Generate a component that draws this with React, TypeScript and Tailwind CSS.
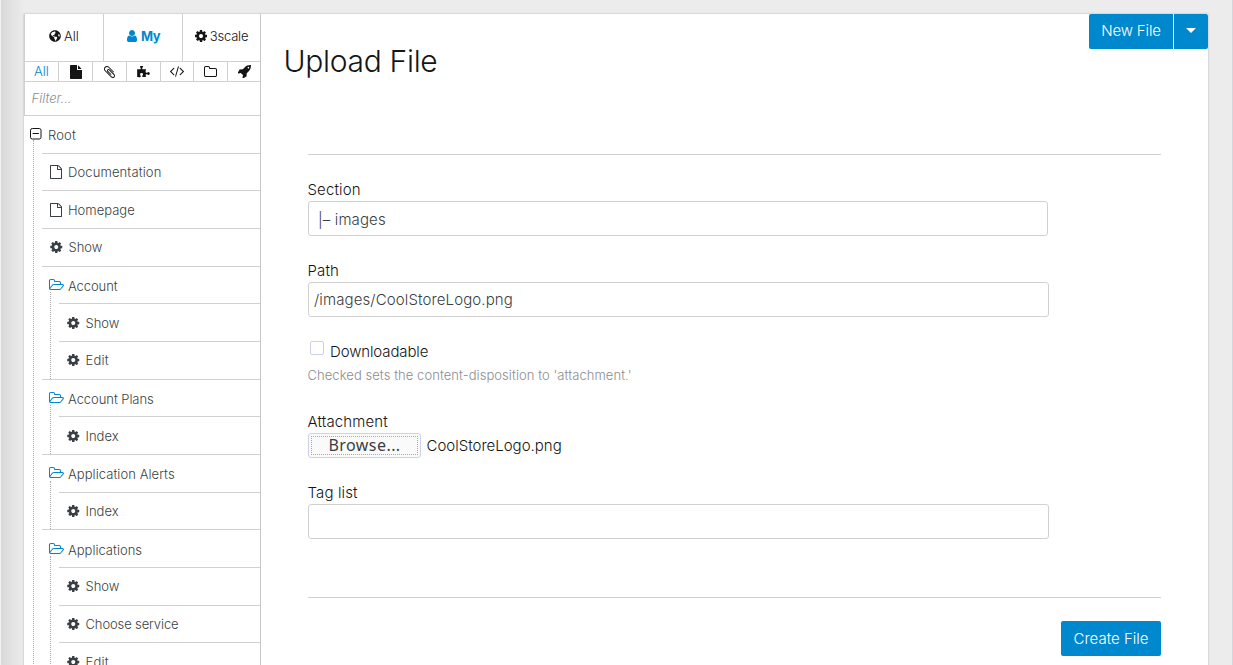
import React from "react";
import { FaGlobeAmericas } from "react-icons/fa";

type GlyphProps = { className?: string };

const glyph =
  (viewBox: string, d: string) =>
  ({ className }: GlyphProps) => (
    <svg viewBox={viewBox} fill="currentColor" className={className} aria-hidden="true">
      <path d={d} />
    </svg>
  );

const Cog = glyph(
  "128 128 1536 1536",
  "M1152 896q0-106-75-181t-181-75-181 75-75 181 75 181 181 75 181-75 75-181zm512-109v222q0 12-8 23t-20 13l-185 28q-19 54-39 91 35 50 107 138 10 12 10 25t-9 23q-27 37-99 108t-94 71q-12 0-26-9l-138-108q-44 23-91 38-16 136-29 186-7 28-36 28h-222q-14 0-24.5-8.5t-11.5-21.5l-28-184q-49-16-90-37l-141 107q-10 9-25 9-14 0-25-11-126-114-165-168-7-10-7-23 0-12 8-23 15-21 51-66.5t54-70.5q-27-50-41-99l-183-27q-13-2-21-12.5t-8-23.5v-222q0-12 8-23t19-13l186-28q14-46 39-92-40-57-107-138-10-12-10-24 0-10 9-23 26-36 98.5-107.5t94.5-71.5q13 0 26 10l138 107q44-23 91-38 16-136 29-186 7-28 36-28h222q14 0 24.5 8.5t11.5 21.5l28 184q49 16 90 37l142-107q9-9 24-9 13 0 25 10 129 119 165 170 7 8 7 22 0 12-8 23-15 21-51 66.5t-54 70.5q26 50 41 98l183 28q13 2 21 12.5t8 23.5z",
);
const FolderOpen = glyph(
  "64 128 1920 1408",
  "M1845 931q0-35-53-35h-1088q-40 0-85.5 21.5t-71.5 52.5l-294 363q-18 24-18 40 0 35 53 35h1088q40 0 86-22t71-53l294-363q18-22 18-39zm-1141-163h768v-160q0-40-28-68t-68-28h-576q-40 0-68-28t-28-68v-64q0-40-28-68t-68-28h-320q-40 0-68 28t-28 68v853l256-315q44-53 116-87.5t140-34.5zm1269 163q0 62-46 120l-295 363q-43 53-116 87.5t-140 34.5h-1088q-92 0-158-66t-66-158v-960q0-92 66-158t158-66h320q92 0 158 66t66 158v32h544q92 0 158 66t66 158v160h192q54 0 99 24.5t67 70.5q15 32 15 68z",
);
const Folder = glyph(
  "64 128 1664 1408",
  "M1600 1312v-704q0-40-28-68t-68-28h-704q-40 0-68-28t-28-68v-64q0-40-28-68t-68-28h-320q-40 0-68 28t-28 68v960q0 40 28 68t68 28h1216q40 0 68-28t28-68zm128-704v704q0 92-66 158t-158 66h-1216q-92 0-158-66t-66-158v-960q0-92 66-158t158-66h320q92 0 158 66t66 158v32h672q92 0 158 66t66 158z",
);
const FileOutline = glyph(
  "128 0 1536 1792",
  "M1596 380q28 28 48 76t20 88v1152q0 40-28 68t-68 28h-1344q-40 0-68-28t-28-68v-1600q0-40 28-68t68-28h896q40 0 88 20t76 48zm-444-244v376h376q-10-29-22-41l-313-313q-12-12-41-22zm384 1528v-1024h-416q-40 0-68-28t-28-68v-416h-768v1536h1280z",
);
const FileSolid = glyph(
  "128 0 1536 1792",
  "M1152 512v-472q22 14 36 28l408 408q14 14 28 36h-472zm-128 32q0 40 28 68t68 28h544v1056q0 40-28 68t-68 28h-1344q-40 0-68-28t-28-68v-1600q0-40 28-68t68-28h800v544z",
);
const User = glyph(
  "256 128 1280 1536",
  "M1536 1399q0 109-62.5 187t-150.5 78h-854q-88 0-150.5-78t-62.5-187q0-85 8.5-160.5t31.5-152 58.5-131 94-89 134.5-34.5q131 128 313 128t313-128q76 0 134.5 34.5t94 89 58.5 131 31.5 152 8.5 160.5zm-256-887q0 159-112.5 271.5t-271.5 112.5-271.5-112.5-112.5-271.5 112.5-271.5 271.5-112.5 271.5 112.5 112.5 271.5z",
);
const Rocket = glyph(
  "64 128 1600 1600",
  "M1440 448q0-40-28-68t-68-28-68 28-28 68 28 68 68 28 68-28 28-68zm224-288q0 249-75.5 430.5t-253.5 360.5q-81 80-195 176l-20 379q-2 16-16 26l-384 224q-7 4-16 4-12 0-23-9l-64-64q-13-14-8-32l85-276-281-281-276 85q-3 1-9 1-14 0-23-9l-64-64q-17-19-5-39l224-384q10-14 26-16l379-20q96-114 176-195 188-187 358-258t431-71q14 0 24 9.5t10 22.5z",
);
const Paperclip = glyph(
  "196 132 1400 1528",
  "M1596 1385q0 117-79 196t-196 79q-135 0-235-100l-777-776q-113-115-113-271 0-159 110-270t269-111q158 0 273 113l605 606q10 10 10 22 0 16-30.5 46.5t-46.5 30.5q-13 0-23-10l-606-607q-79-77-181-77-106 0-179 75t-73 181q0 105 76 181l776 777q63 63 145 63 64 0 106-42t42-106q0-82-63-145l-581-581q-26-24-60-24-29 0-48 19t-19 48q0 32 25 59l410 410q10 10 10 22 0 16-31 47t-47 31q-12 0-22-10l-410-410q-63-61-63-149 0-82 57-139t139-57q88 0 149 63l581 581q100 98 100 235z",
);
const Code = glyph(
  "-20 256 1832 1408",
  "M553 1399l-50 50q-10 10-23 10t-23-10l-466-466q-10-10-10-23t10-23l466-466q10-10 23-10t23 10l50 50q10 10 10 23t-10 23l-393 393 393 393q10 10 10 23t-10 23zm591-1067l-373 1291q-4 13-15.5 19.5t-23.5 2.5l-62-17q-13-4-19.5-15.5t-2.5-24.5l373-1291q4-13 15.5-19.5t23.5-2.5l62 17q13 4 19.5 15.5t2.5 24.5zm657 651l-466 466q-10 10-23 10t-23-10l-50-50q-10-10-10-23t10-23l393-393-393-393q-10-10-10-23t10-23l50-50q10-10 23-10t23 10l466 466q10 10 10 23t-10 23z",
);
const Puzzle = glyph(
  "90 90 1670 1576",
  "M1755 1083q0 81-44.5 135t-123.5 54q-41 0-77.5-17.5t-59-38-56.5-38-71-17.5q-110 0-110 124 0 39 16 115t15 115v5q-22 0-33 1-34 3-97.5 11.5t-115.5 13.5-98 5q-61 0-103-26.5t-42-83.5q0-37 17.5-71t38-56.5 38-59 17.5-77.5q0-79-54-123.5t-135-44.5q-84 0-143 45.5t-59 127.5q0 43 15 83t33.5 64.5 33.5 53 15 50.5q0 45-46 89-37 35-117 35-95 0-245-24-9-2-27.5-4t-27.5-4l-13-2q-1 0-3-1-2 0-2-1v-1024q2 1 17.5 3.5t34 5 21.5 3.5q150 24 245 24 80 0 117-35 46-44 46-89 0-22-15-50.5t-33.5-53-33.5-64.5-15-83q0-82 59-127.5t144-45.5q80 0 134 44.5t54 123.5q0 41-17.5 77.5t-38 59-38 56.5-17.5 71q0 57 42 83.5t103 26.5q64 0 180-15t163-17v2q-1 2-3.5 17.5t-5 34-3.5 21.5q-24 150-24 245 0 80 35 117 44 46 89 46 22 0 50.5-15t53-33.5 64.5-33.5 83-15q82 0 127.5 59t45.5 143z",
);

type Kind = "file" | "page" | "folder";
type Node = { label: string; kind: Kind; row: string; text?: string; children?: Node[] };

const tree: Node[] = [
  { label: "Documentation", kind: "file", row: "h-[37px]", text: "tracking-[0.12px]" },
  { label: "Homepage", kind: "file", row: "h-[38px]" },
  { label: "Show", kind: "page", row: "h-[38px] pb-[2px]" },
  {
    label: "Account",
    kind: "folder",
    row: "h-[37px] pt-px",
    text: "tracking-[-0.08px]",
    children: [
      { label: "Show", kind: "page", row: "h-[38px]" },
      { label: "Edit", kind: "page", row: "h-[38px] pb-[2px]", text: "tracking-[0.25px]" },
    ],
  },
  {
    label: "Account Plans",
    kind: "folder",
    row: "h-[37px] pt-px",
    text: "tracking-[-0.06px]",
    children: [{ label: "Index", kind: "page", row: "h-[38px]" }],
  },
  {
    label: "Application Alerts",
    kind: "folder",
    row: "h-[38px] pt-px",
    text: "tracking-[0.06px]",
    children: [{ label: "Index", kind: "page", row: "h-[37px]" }],
  },
  {
    label: "Applications",
    kind: "folder",
    row: "h-[38px] pt-[3px]",
    children: [
      { label: "Show", kind: "page", row: "h-[38px] pb-[2px]" },
      { label: "Choose service", kind: "page", row: "h-[37px]", text: "tracking-[-0.12px]" },
      { label: "Edit", kind: "page", row: "h-[38px]", text: "tracking-[0.25px]" },
    ],
  },
];

function KindIcon({ kind }: { kind: Kind }) {
  if (kind === "file") return <FileOutline className="ml-[8px] mr-[6px] h-[14px] w-[12px]" />;
  if (kind === "folder")
    return <FolderOpen className="mb-[3px] ml-[6.5px] mr-[4.5px] h-[11px] w-[15px] text-[#0088ce]" />;
  return <Cog className="ml-[8px] mr-[6px] h-[12px] w-[12.5px]" />;
}

function TreeItem({ node }: { node: Node }) {
  return (
    <li>
      <div className={`${node.row} flex items-center border-t border-[#d1d1d1]`}>
        <KindIcon kind={node.kind} />
        <span className={node.text}>{node.label}</span>
      </div>
      {node.children && (
        <ul className="-mt-[11px] ml-[8px] border-l border-dotted border-[#a8a8a8] pl-[8px] pt-[11px]">
          {node.children.map((child) => (
            <TreeItem key={child.label} node={child} />
          ))}
        </ul>
      )}
    </li>
  );
}

function Sidebar() {
  const cell = "flex h-full items-center justify-center border-l border-[#d1d1d1]";
  return (
    <aside className="flex w-[237px] shrink-0 flex-col border-r border-[#c6c6c6] text-[13px] font-[350] leading-[20px] text-[#393f44]">
      <nav className="flex h-[47px] shrink-0 text-[#151515]">
        <a className={`${cell} w-[79px] gap-[3px] pb-[3px]`}>
          <FaGlobeAmericas className="h-[12px] w-[12px]" />
          <span>All</span>
        </a>
        <a className={`${cell} w-[79px] gap-[4px] pb-[3px] font-bold text-[#0088ce]`}>
          <User className="ml-px h-[12px] w-[10px]" />
          <span className="tracking-[-0.6px]">My</span>
        </a>
        <a className={`${cell} w-[78px] gap-[3px] pb-[3px]`}>
          <Cog className="h-[12px] w-[12px]" />
          <span className="tracking-[-0.2px]">3scale</span>
        </a>
      </nav>
      <nav className="flex h-[21px] shrink-0 border-y border-[#d1d1d1] text-[#151515]">
        <a className={`${cell} w-[34px] pb-px text-[#0088ce]`}>All</a>
        <a className={`${cell} w-[34px]`}>
          <FileSolid className="h-[14px] w-[12px]" />
        </a>
        <a className={`${cell} w-[34px]`}>
          <Paperclip className="h-[12px] w-[11px]" />
        </a>
        <a className={`${cell} w-[34px]`}>
          <Puzzle className="h-[12px] w-[13px]" />
        </a>
        <a className={`${cell} w-[33px]`}>
          <Code className="h-[11px] w-[14px]" />
        </a>
        <a className={`${cell} w-[34px] pb-px`}>
          <Folder className="h-[11px] w-[13px]" />
        </a>
        <a className={`${cell} w-[33px]`}>
          <Rocket className="h-[13px] w-[13px]" />
        </a>
      </nav>
      <div className="flex h-[34px] shrink-0 items-center border-b border-l border-[#d1d1d1] pb-[2px] pl-[6.5px] italic text-[#8b8d8f]">
        Filter...
      </div>
      <div className="flex h-[37px] shrink-0 items-center pt-px">
        <svg viewBox="0 0 12 12" className="mb-[3px] ml-[6px] mr-[6px] h-[12px] w-[12px]" fill="none" stroke="#151515">
          <rect x="0.5" y="0.5" width="10.5" height="10.5" rx="1.8" />
          <path d="M2.6 5.5h6.3" />
        </svg>
        <span className="tracking-[0.15px]">Root</span>
      </div>
      <ul className="-mt-[13px] ml-[9px] border-l border-dotted border-[#a8a8a8] pl-[8px] pt-[13px]">
        {tree.map((node) => (
          <TreeItem key={node.label} node={node} />
        ))}
      </ul>
    </aside>
  );
}

function Main() {
  const label = "-ml-[0.5px] h-[24px] leading-[26px] tracking-[0.12px] text-[#151515]";
  const field = "flex h-[35px] items-center rounded-[3px] border border-[#d1d1d1]";
  return (
    <main className="min-w-0 flex-1 text-[15px] font-[350] text-[#393f44]">
      <header className="flex justify-between">
        <h1 className="pl-[22.5px] pt-[27px] text-[30px] font-light leading-[40px] tracking-[-0.3px] text-[#151515]">
          Upload File
        </h1>
        <div className="flex h-[35px] gap-px text-white">
          <button className="w-[84px] rounded-l-[2px] bg-[#0088ce] pb-px font-light tracking-[-0.15px]">New File</button>
          <button className="flex w-[34px] items-center justify-center rounded-r-[2px] bg-[#0088ce]" aria-label="More actions">
            <svg viewBox="0 0 10 5" className="mb-[2px] h-[5px] w-[10px]" fill="currentColor">
              <path d="M0 0h10L5 5z" />
            </svg>
          </button>
        </div>
      </header>
      <form className="ml-[47px] w-[853px] pt-[73px]">
        <div className="border-t border-[#d1d1d1] pt-[22px]">
          <div className={label}>Section</div>
          <div className={`${field} w-[740px] pl-[9px] pt-[3px] tracking-[0.12px]`}>|– images</div>
        </div>
        <div className="pt-[22px]">
          <div className={label}>Path</div>
          <div className={`${field} w-[741px] pl-[5px] pt-px tracking-[0.12px]`}>/images/CoolStoreLogo.png</div>
        </div>
        <div className="pt-[22px]">
          <div className="flex h-[26px] items-start pl-[2px] pt-[2px]">
            <span className="h-[14px] w-[14px] rounded-[2px] border border-[#cdd2e6]" />
            <span className="pl-[6px] leading-[22px] tracking-[-0.12px] text-[#151515]">Downloadable</span>
          </div>
          <p className="-ml-[0.5px] text-[13px] leading-[20px] tracking-[0.06px] text-[#8b8d8f]">
            Checked sets the content-disposition to 'attachment.'
          </p>
        </div>
        <div className="pt-[24px]">
          <div className={label}>Attachment</div>
          <div className="flex h-[25px] items-center">
            <span className="flex h-[25px] w-[113px] rounded-[3px] border border-[#cdd2e6] bg-[#fafafa] p-[2px]">
              <span className="flex flex-1 items-center justify-center border border-dotted border-[#a8a8a8] pb-px font-['Noto_Sans'] text-[16px] font-normal leading-[16px] tracking-[0.45px]">
                Browse...
              </span>
            </span>
            <span className="pl-[5.5px] pt-[2px] text-[#151515]">CoolStoreLogo.png</span>
          </div>
        </div>
        <div className="pt-[22px]">
          <div className={label}>Tag list</div>
          <div className={`${field} w-[741px]`} />
        </div>
        <div className="mt-[58px] flex justify-end border-t border-[#d1d1d1] pt-[23px]">
          <button className="h-[35px] w-[100px] rounded-[2px] bg-[#0088ce] pt-px font-light text-white">Create File</button>
        </div>
      </form>
    </main>
  );
}

export default function App() {
  return (
    <div className="flex h-[665px] w-[1233px] overflow-hidden border-r border-[#d6d6da] bg-[#ececec] font-['Inter','Liberation_Sans',sans-serif]">
      <div className="w-[24px] shrink-0 border-l border-[#f2f2f2] bg-linear-to-r from-[#d9d9d9] to-[#ececec]" />
      <div className="mt-[14px] flex h-[700px] w-[1184px] shrink-0 bg-white shadow-[0_0_2px_rgba(0,0,0,0.25)]">
        <Sidebar />
        <Main />
      </div>
    </div>
  );
}
